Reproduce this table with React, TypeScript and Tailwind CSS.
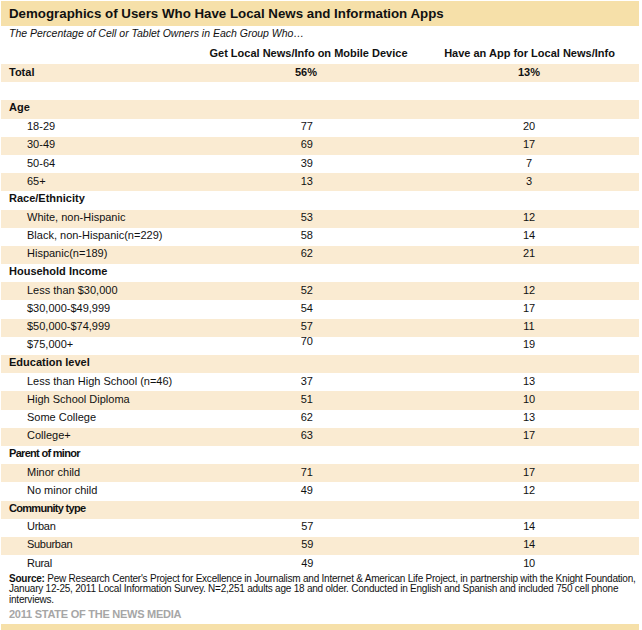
import React from "react";

type Row = {
  kind: "total" | "blank" | "group" | "item";
  label?: string;
  a?: string;
  b?: string;
  narrow?: boolean;
  raiseA?: boolean;
};

const rows: Row[] = [
  { kind: "total", label: "Total", a: "56%", b: "13%" },
  { kind: "blank" },
  { kind: "group", label: "Age" },
  { kind: "item", label: "18-29", a: "77", b: "20" },
  { kind: "item", label: "30-49", a: "69", b: "17" },
  { kind: "item", label: "50-64", a: "39", b: "7" },
  { kind: "item", label: "65+", a: "13", b: "3" },
  { kind: "group", label: "Race/Ethnicity" },
  { kind: "item", label: "White, non-Hispanic", a: "53", b: "12" },
  { kind: "item", label: "Black, non-Hispanic(n=229)", a: "58", b: "14" },
  { kind: "item", label: "Hispanic(n=189)", a: "62", b: "21" },
  { kind: "group", label: "Household Income" },
  { kind: "item", label: "Less than $30,000", a: "52", b: "12" },
  { kind: "item", label: "$30,000-$49,999", a: "54", b: "17" },
  { kind: "item", label: "$50,000-$74,999", a: "57", b: "11" },
  { kind: "item", label: "$75,000+", a: "70", b: "19", raiseA: true },
  { kind: "group", label: "Education level" },
  { kind: "item", label: "Less than High School (n=46)", a: "37", b: "13" },
  { kind: "item", label: "High School Diploma", a: "51", b: "10" },
  { kind: "item", label: "Some College", a: "62", b: "13" },
  { kind: "item", label: "College+", a: "63", b: "17" },
  { kind: "group", label: "Parent of minor", narrow: true },
  { kind: "item", label: "Minor child", a: "71", b: "17" },
  { kind: "item", label: "No minor child", a: "49", b: "12" },
  { kind: "group", label: "Community type", narrow: true },
  { kind: "item", label: "Urban", a: "57", b: "14", narrow: true },
  { kind: "item", label: "Suburban", a: "59", b: "14", narrow: true },
  { kind: "item", label: "Rural", a: "49", b: "10", narrow: true },
];

function TableRow({ row, shaded }: { row: Row; shaded: boolean }) {
  const bg = shaded ? "bg-[#FAEBD2]" : "bg-white";
  if (row.kind === "blank") {
    return <div className={`h-[18.2px] ${bg}`} />;
  }
  if (row.kind === "group") {
    return (
      <div className={`h-[18.2px] ${bg} flex items-start pl-[8px] pt-[1px]`}>
        <span
          className={`font-bold text-[11px] leading-[13px] ${
            row.narrow ? "tracking-[-0.7px]" : ""
          }`}
        >
          {row.label}
        </span>
      </div>
    );
  }
  const isTotal = row.kind === "total";
  return (
    <div
      className={`h-[18.2px] ${bg} grid grid-cols-[200px_112px_106px_220px] items-center text-[11px] leading-[13px] pb-[2px] ${
        isTotal ? "font-bold" : ""
      } ${row.narrow ? "tracking-[-0.3px]" : ""}`}
    >
      <div className={isTotal ? "pl-[8px]" : "pl-[26px]"}>{row.label}</div>
      <div
        className={`text-right ${isTotal ? "mr-[-4px]" : ""} ${
          row.raiseA ? "-translate-y-[3px]" : ""
        }`}
      >
        {row.a}
      </div>
      <div />
      <div className="text-center">{row.b}</div>
    </div>
  );
}

export default function App() {
  return (
    <div
      className="w-[642px] h-[630px] bg-white text-[#111] overflow-hidden"
      style={{ fontFamily: '"Liberation Sans", Arial, sans-serif' }}
    >
      <div className="pl-[1px] w-[639px] pt-[1px]">
        <div className="h-[25px] bg-[#F6E0A9] flex items-center pl-[8px]">
          <span className="font-bold text-[13.3px] leading-[16px]">
            Demographics of Users Who Have Local News and Information Apps
          </span>
        </div>
        <div className="h-[18px] pl-[8px] italic text-[10.5px] leading-[14px]">
          The Percentage of Cell or Tablet Owners in Each Group Who…
        </div>
        <div className="h-[20px] pt-[2px] flex text-[11px] leading-[14px] font-bold">
          <div className="w-[200px]" />
          <div className="w-[215px] text-center whitespace-nowrap">
            Get Local News/Info on Mobile Device
          </div>
          <div className="w-[4px]" />
          <div className="w-[219px] text-center whitespace-nowrap">
            Have an App for Local News/Info
          </div>
        </div>
        <div>
          {rows.map((r, i) => (
            <TableRow key={i} row={r} shaded={i % 2 === 0} />
          ))}
        </div>
        <div className="pl-[8px] text-[10px] leading-[10.5px] tracking-[-0.22px] whitespace-nowrap pt-[0.4px]">
          <div>
            <span className="font-bold">Source:</span> Pew Research Center's
            Project for Excellence in Journalism and Internet &amp; American
            Life Project, in partnership with the Knight Foundation,
          </div>
          <div>
            January 12-25, 2011 Local Information Survey. N=2,251 adults age 18
            and older. Conducted in English and Spanish and included 750 cell
            phone
          </div>
          <div>interviews.</div>
        </div>
        <div className="h-[19px] flex items-center pl-[8px]">
          <span className="font-bold text-[11px] leading-[13px] text-[#A6A6A6] tracking-[-0.25px]">
            2011 STATE OF THE NEWS MEDIA
          </span>
        </div>
        <div className="h-[6px] bg-[#F6E0A9]" />
      </div>
    </div>
  );
}
